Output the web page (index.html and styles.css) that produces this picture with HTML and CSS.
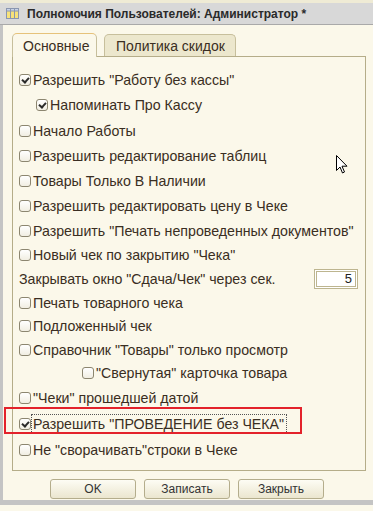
FILE: index.html
```html
<!DOCTYPE html>
<html>
<head>
<meta charset="utf-8">
<link rel="stylesheet" href="styles.css">
</head>
<body>
<div class="window">
  <div class="topline"></div>
  <div class="titlebar">
    <svg class="ticon" width="13" height="11" viewBox="0 0 13 11">
      <rect x="0.5" y="0.5" width="12" height="10" fill="#f7e27a" stroke="#8a96b0"/>
      <rect x="0.5" y="0.5" width="12" height="2.5" fill="#c9d3e6" stroke="#8a96b0"/>
      <line x1="4.5" y1="0.5" x2="4.5" y2="10.5" stroke="#8a96b0"/>
      <line x1="8.5" y1="0.5" x2="8.5" y2="10.5" stroke="#8a96b0"/>
    </svg>
    <span class="ttext">Полномочия Пользователей: Администратор *</span>
  </div>
  <div class="content">
    <div class="tabs">
      <div class="tab active">Основные</div>
      <div class="tab">Политика скидок</div>
    </div>
    <div class="panel">
      <div class="rows">
        <div class="row"><span class="cb checked"></span>Разрешить "Работу без кассы"</div>
        <div class="row lvl2"><span class="cb checked"></span>Напоминать Про Кассу</div>
        <div class="row"><span class="cb"></span>Начало Работы</div>
        <div class="row"><span class="cb"></span>Разрешить редактирование таблиц</div>
        <div class="row"><span class="cb"></span>Товары Только В Наличии</div>
        <div class="row"><span class="cb"></span>Разрешить редактировать цену в Чеке</div>
        <div class="row"><span class="cb"></span>Разрешить "Печать непроведенных документов"</div>
        <div class="row"><span class="cb"></span>Новый чек по закрытию "Чека"</div>
        <div class="row field"><span class="flabel">Закрывать окно "Сдача/Чек" через сек.</span><span class="input">5</span></div>
        <div class="row"><span class="cb"></span>Печать товарного чека</div>
        <div class="row"><span class="cb"></span>Подложенный чек</div>
        <div class="row"><span class="cb"></span>Справочник "Товары" только просмотр</div>
        <div class="row lvl3"><span class="cb"></span>"Свернутая" карточка товара</div>
        <div class="row"><span class="cb"></span>"Чеки" прошедшей датой</div>
        <div class="row"><span class="cb checked"></span><span class="focus">Разрешить "ПРОВЕДЕНИЕ без ЧЕКА"</span></div>
        <div class="row"><span class="cb"></span>Не "сворачивать"строки в Чеке</div>
      </div>
    </div>
    <div class="buttons">
      <button class="btn">OK</button>
      <button class="btn">Записать</button>
      <button class="btn">Закрыть</button>
    </div>
  </div>
  <div class="redbox"></div>
  <svg class="cursor" width="12" height="19" viewBox="0 0 12 19">
    <path d="M0.5 0.5 L0.5 15.5 L4 12 L6.5 18 L8.5 17 L6 11.2 L11 11.2 Z" fill="#fff" stroke="#000" stroke-width="1" stroke-linejoin="miter"/>
  </svg>
</div>
</body>
</html>
```
FILE: styles.css
```css
html, body {
  margin: 0;
  padding: 0;
  background: #fbf8ea;
}
.window {
  position: relative;
  width: 373px;
  height: 511px;
  overflow: hidden;
  background: #fbf8ea;
  font-family: "Liberation Sans", Arial, sans-serif;
  color: #3a2e22;
}
.topline {
  height: 3px;
  background: #efebd5;
}
.titlebar {
  height: 21px;
  background: #d8d8d8;
  border-bottom: 1px solid #a9a9a9;
  display: flex;
  align-items: center;
  padding-left: 6px;
  gap: 8px;
}
.ticon { flex: none; }
.ttext {
  font-weight: bold;
  font-size: 12px;
  color: #2a2a2a;
}
.content {
  border-left: 3px solid #c4c4c4;
  border-bottom: 5px solid #c4c4c4;
  height: 480px;
  box-sizing: border-box;
  padding: 7px 0 0 9px;
}
.tabs {
  display: flex;
  gap: 7px;
  height: 24px;
  align-items: flex-end;
  position: relative;
  z-index: 1;
}
.tab {
  height: 22px;
  box-sizing: border-box;
  border: 1px solid #c7bf9c;
  border-bottom: none;
  border-radius: 5px 5px 0 0;
  background: #ece7cd;
  font-size: 14px;
  color: #3a2e22;
  padding: 3px 10px 0 11px;
}
.tab.active {
  height: 24px;
  background: #fbf8ea;
  border-color: #c7bf9c;
  border-top: 1px solid #e6c27a;
  padding: 4px 9px 0 10px;
  width: 85px;
  margin-bottom: -1px;
}
.panel {
  width: 354px;
  height: 415px;
  box-sizing: border-box;
  border: 1px solid #b5ad89;
  padding: 11px 0 0 6px;
}
.rows {
  display: grid;
  grid-template-rows: 24px 26px 25px 25px 25px 25px 25px 24px 24px 23px 24px 23px 24px 25px 27px 26px;
}
.row {
  display: flex;
  align-items: center;
  font-size: 14.2px;
  white-space: nowrap;
}
.row.lvl2 { padding-left: 17px; }
.row.lvl3 { padding-left: 63px; }
.cb {
  flex: none;
  width: 12px;
  height: 12px;
  box-sizing: border-box;
  border: 1px solid #8c8670;
  border-radius: 3px;
  background: linear-gradient(#ffffff, #f1eee2);
  margin-right: 2px;
  position: relative;
}
.cb.checked::after {
  content: "";
  position: absolute;
  left: 2px;
  top: 2px;
  width: 5px;
  height: 3px;
  border-left: 2px solid #2a2a2a;
  border-bottom: 2px solid #2a2a2a;
  transform: rotate(-48deg);
  transform-origin: 50% 50%;
}
.field {
  justify-content: space-between;
  padding-right: 7px;
}
.input {
  width: 44px;
  height: 20px;
  box-sizing: border-box;
  border: 3px double #bdb58f;
  background: #fff;
  text-align: right;
  font-size: 13px;
  line-height: 14px;
  padding-right: 3px;
  color: #222;
}
.focus {
  outline: 1px dotted #555;
  outline-offset: 1px;
  padding-right: 1px;
}
.buttons {
  display: flex;
  gap: 8px;
  padding: 8px 0 0 38px;
}
.btn {
  width: 86px;
  height: 20px;
  box-sizing: border-box;
  border: 1px solid #b4ad8c;
  border-radius: 3px;
  background: linear-gradient(#fdfcf4, #ebe6cf);
  font-family: "Liberation Sans", Arial, sans-serif;
  font-size: 12px;
  color: #333;
  padding: 0;
}
.redbox {
  position: absolute;
  left: 4px;
  top: 407px;
  width: 298px;
  height: 27px;
  box-sizing: border-box;
  border: 2px solid #e3222b;
}
.cursor {
  position: absolute;
  left: 336px;
  top: 155px;
}
```
